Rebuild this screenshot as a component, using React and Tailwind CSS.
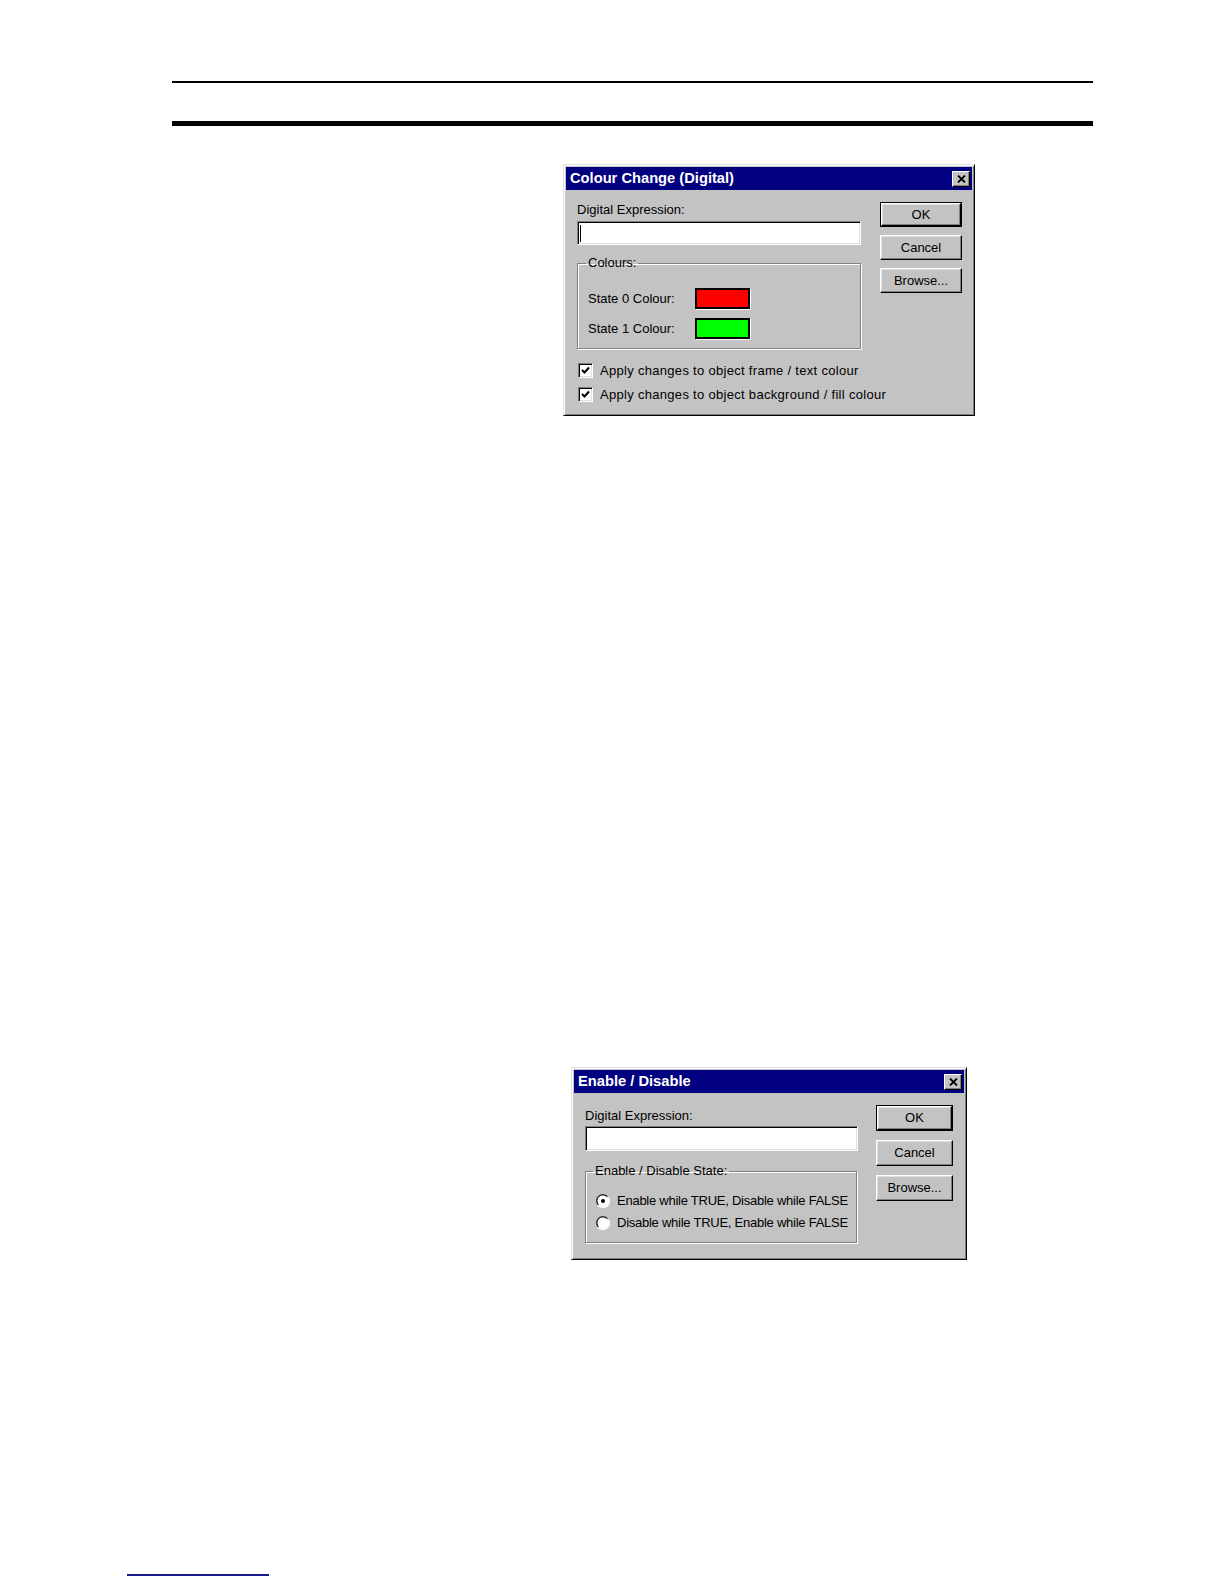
import React from "react";

const font = { fontFamily: '"Liberation Sans", Arial, sans-serif' };

function CloseBtn() {
  return (
    <div className="w-[18px] h-[16px] bg-[#c3c3c3] border border-t-white border-l-white border-r-black border-b-black shadow-[inset_-1px_-1px_0_#808080] flex items-center justify-center">
      <svg width="9" height="8" viewBox="0 0 9 8">
        <path d="M1 0.5 L8 7.5 M8 0.5 L1 7.5" stroke="#000" strokeWidth="1.8" />
      </svg>
    </div>
  );
}

function TitleBar({ title, h }) {
  return (
    <div className={`${h} bg-[#000080] flex items-center justify-between pl-[4px] pr-[2px]`}>
      <span className="text-white font-bold text-[14.7px] leading-none whitespace-nowrap">{title}</span>
      <CloseBtn />
    </div>
  );
}

function Button({ label, def, h, w }) {
  const inner = (
    <div className={`${def ? "w-full h-full" : `${w} ${h}`} bg-[#c3c3c3] border border-t-white border-l-white border-r-black border-b-black shadow-[inset_-1px_-1px_0_#808080,inset_1px_1px_0_#dfdfdf] flex items-center justify-center text-[13px] text-black whitespace-nowrap`}>
      {label}
    </div>
  );
  if (def) {
    return <div className={`${w} ${h} border border-black`}>{inner}</div>;
  }
  return inner;
}

function Input({ h, caret }) {
  return (
    <div className={`${h} w-full bg-white border border-t-[#808080] border-l-[#808080] border-r-white border-b-white shadow-[inset_1px_1px_0_#000,inset_-1px_-1px_0_#dfdfdf] flex items-center pl-[2px]`}>
      {caret && <div className="w-[1px] h-[17px] bg-black" />}
    </div>
  );
}

function Checkbox() {
  return (
    <div className="w-[15px] h-[15px] shrink-0 bg-white border border-t-[#808080] border-l-[#808080] border-r-white border-b-white shadow-[inset_1px_1px_0_#000,inset_-1px_-1px_0_#dfdfdf] flex items-center justify-center">
      <svg width="9" height="9" viewBox="0 0 9 9">
        <path d="M1 4 L3.5 6.5 L8 1.5" fill="none" stroke="#000" strokeWidth="2" />
      </svg>
    </div>
  );
}

function Radio({ checked }) {
  return (
    <svg width="14" height="14" viewBox="0 0 14 14" className="shrink-0">
      <circle cx="7" cy="7" r="6" fill="#fff" />
      <path d="M12.2 3 A6 6 0 0 0 1.8 11" fill="none" stroke="#808080" strokeWidth="1.2" />
      <path d="M11 2.6 A5 5 0 0 0 2.6 11" fill="none" stroke="#000" strokeWidth="1" />
      <path d="M1.8 11 A6 6 0 0 0 12.2 3" fill="none" stroke="#fff" strokeWidth="1.2" />
      {checked && <circle cx="7" cy="7" r="2" fill="#000" />}
    </svg>
  );
}

const windowCls =
  "bg-[#c3c3c3] border border-t-[#dfdfdf] border-l-[#dfdfdf] border-r-black border-b-black shadow-[inset_1px_1px_0_#fff,inset_-1px_-1px_0_#808080] p-[2px] flex flex-col text-black text-[13px] leading-[16px]";

const groupCls =
  "border border-[#808080] shadow-[inset_1px_1px_0_#fff,1px_1px_0_#fff]";

function ColourDialog() {
  return (
    <div className={`ml-[563px] mt-[38px] w-[412px] h-[252px] ${windowCls}`}>
      <TitleBar title="Colour Change (Digital)" h="h-[23px]" />
      <div className="flex pl-[11px] pt-[12px]">
        <div className="w-[284px] flex flex-col">
          <div className="whitespace-nowrap">Digital Expression:</div>
          <div className="mt-[3px]">
            <Input h="h-[24px]" caret />
          </div>
          <fieldset className={`mt-[10px] h-[94px] ${groupCls}`}>
            <legend className="ml-[8px] px-[2px] leading-[16px]">Colours:</legend>
            <div className="flex flex-col gap-[9px] pl-[10px] pt-[17px]">
              <div className="flex items-center h-[21px]">
                <span className="w-[107px] whitespace-nowrap">State 0 Colour:</span>
                <div className="w-[55px] h-[21px] bg-[#ff0000] border-2 border-black shadow-[1px_1px_0_#fff]" />
              </div>
              <div className="flex items-center h-[21px]">
                <span className="w-[107px] whitespace-nowrap">State 1 Colour:</span>
                <div className="w-[55px] h-[21px] bg-[#00ff00] border-2 border-black shadow-[1px_1px_0_#fff]" />
              </div>
            </div>
          </fieldset>
          <div className="mt-[14px] flex flex-col gap-[9px] pl-[1px]">
            <div className="flex items-center gap-[7px] h-[15px]">
              <Checkbox />
              <span className="whitespace-nowrap tracking-[0.3px]">Apply changes to object frame / text colour</span>
            </div>
            <div className="flex items-center gap-[7px] h-[15px]">
              <Checkbox />
              <span className="whitespace-nowrap tracking-[0.3px]">Apply changes to object background / fill colour</span>
            </div>
          </div>
        </div>
        <div className="ml-[19px] flex flex-col gap-[8px]">
          <Button label="OK" def w="w-[82px]" h="h-[25px]" />
          <Button label="Cancel" w="w-[82px]" h="h-[25px]" />
          <Button label="Browse..." w="w-[82px]" h="h-[25px]" />
        </div>
      </div>
    </div>
  );
}

function EnableDialog() {
  return (
    <div className={`ml-[571px] mt-[651px] w-[396px] h-[193px] ${windowCls}`}>
      <TitleBar title="Enable / Disable" h="h-[23px]" />
      <div className="flex pl-[11px] pt-[12px]">
        <div className="w-[273px] flex flex-col mt-[3px]">
          <div className="whitespace-nowrap">Digital Expression:</div>
          <div className="mt-[2px]">
            <Input h="h-[25px]" />
          </div>
          <fieldset className={`mt-[12px] w-[272px] h-[80px] ${groupCls}`}>
            <legend className="ml-[7px] px-[2px] leading-[16px] whitespace-nowrap">Enable / Disable State:</legend>
            <div className="flex flex-col gap-[6px] pl-[10px] pt-[14px]">
              <div className="flex items-center gap-[7px] h-[16px]">
                <Radio checked />
                <span className="whitespace-nowrap tracking-[-0.25px]">Enable while TRUE, Disable while FALSE</span>
              </div>
              <div className="flex items-center gap-[7px] h-[16px]">
                <Radio />
                <span className="whitespace-nowrap tracking-[-0.25px]">Disable while TRUE, Enable while FALSE</span>
              </div>
            </div>
          </fieldset>
        </div>
        <div className="ml-[18px] flex flex-col gap-[9px]">
          <Button label="OK" def w="w-[77px]" h="h-[26px]" />
          <Button label="Cancel" w="w-[77px]" h="h-[26px]" />
          <Button label="Browse..." w="w-[77px]" h="h-[26px]" />
        </div>
      </div>
    </div>
  );
}

export default function App() {
  return (
    <div className="w-[1224px] h-[1584px] bg-white flex flex-col overflow-hidden" style={font}>
      <div className="ml-[172px] mt-[81px] w-[921px] h-[2px] bg-black" />
      <div className="ml-[172px] mt-[38px] w-[921px] h-[5px] bg-black" />
      <ColourDialog />
      <EnableDialog />
      <div className="ml-[127px] mt-[314px] w-[142px] h-[2px] bg-[#1a1a8c]" />
    </div>
  );
}
